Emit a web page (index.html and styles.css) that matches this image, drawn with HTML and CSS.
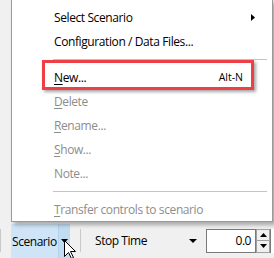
FILE: index.html
```html
<!DOCTYPE html>
<html>
<head>
<meta charset="utf-8">
<link rel="stylesheet" href="styles.css">
</head>
<body>
<div class="screen">
  <div class="workspace"></div>
  <div class="toolbar">
    <span class="tsep first"></span>
    <div class="split-btn">
      <span class="split-label">Scenario</span>
      <span class="split-drop"><svg width="7" height="4" viewBox="0 0 7 4"><path d="M0 0H7L3.5 4Z" fill="#000"/></svg></span>
    </div>
    <span class="tsep"></span>
    <div class="combo">
      <span class="combo-text">Stop Time</span>
      <svg class="combo-arrow" width="8" height="4" viewBox="0 0 8 4"><path d="M0 0H8L4 4Z" fill="#000"/></svg>
    </div>
    <div class="numbox">0.0</div>
    <div class="spin">
      <span class="spin-half"><svg width="7" height="4" viewBox="0 0 7 4"><path d="M0 4H7L3.5 0Z" fill="#000"/></svg></span>
      <span class="spin-half"><svg width="7" height="4" viewBox="0 0 7 4"><path d="M0 0H7L3.5 4Z" fill="#000"/></svg></span>
    </div>
    <div class="edge"></div>
  </div>

  <div class="menu">
    <div class="item"><span class="label">Select Scenario</span><svg class="sub" width="4" height="7" viewBox="0 0 4 7"><path d="M0 0L4 3.5L0 7Z" fill="#000"/></svg></div>
    <div class="item"><span class="label">Configuration / Data Files...</span></div>
    <div class="msep"></div>
    <div class="item"><span class="label"><u>N</u>ew...</span><span class="accel">Alt-N</span></div>
    <div class="item disabled"><span class="label"><u>D</u>elete</span></div>
    <div class="item disabled"><span class="label"><u>R</u>ename...</span></div>
    <div class="item disabled"><span class="label"><u>S</u>how...</span></div>
    <div class="item disabled"><span class="label">Note...</span></div>
    <div class="msep"></div>
    <div class="item disabled"><span class="label"><u>T</u>ransfer controls to scenario</span></div>
  </div>

  <div class="callout"></div>

  <svg class="cursor" width="13" height="20" viewBox="0 0 13 20"><path d="M0.5 0.5V16.5L4.5 12.5L7.5 18.5L9.5 17.5L6.5 11.5H11.5Z" fill="#fff" stroke="#000" stroke-width="1" stroke-linejoin="miter"/></svg>
</div>
</body>
</html>
```

FILE: styles.css
```css
html, body {
  margin: 0;
  padding: 0;
}
body {
  background: #f0f0f0;
  font-family: "Open Sans", "Noto Sans", sans-serif;
  color: #000;
}
.screen {
  position: relative;
  width: 274px;
  height: 258px;
  overflow: hidden;
  display: flex;
  flex-direction: column;
}
.workspace {
  flex: 1;
}
.toolbar {
  height: 35px;
  display: flex;
  align-items: center;
  font-size: 12px;
  letter-spacing: -0.45px;
}
.tsep {
  width: 1px;
  height: 23px;
  background: #c9c9c9;
  margin-left: 10px;
  flex: none;
}
.tsep.first {
  margin-left: 0;
}
.split-btn {
  margin-left: 10px;
  align-self: stretch;
  margin-top: 1px;
  width: 59px;
  display: flex;
  background: #cfe4f6;
  flex: none;
}
.split-label {
  width: 46px;
  padding-left: 1px;
  display: flex;
  align-items: center;
  white-space: nowrap;
}
.split-drop {
  width: 11px;
  border-left: 1px solid #b3d1ec;
  background: #c2dcf2;
  display: flex;
  align-items: center;
  justify-content: center;
}
.combo {
  width: 120px;
  padding-left: 14px;
  box-sizing: border-box;
  display: flex;
  align-items: center;
  flex: none;
}
.combo-text {
  flex: 1;
}
.combo-arrow {
  margin-right: 4px;
}
.numbox {
  margin-left: 5px;
  width: 50px;
  height: 24px;
  box-sizing: border-box;
  border: 1px solid #7a7a7a;
  background: #fff;
  text-align: right;
  font-size: 12px;
  line-height: 22px;
  padding-right: 4px;
  flex: none;
}
.spin {
  width: 14px;
  height: 24px;
  display: flex;
  flex-direction: column;
  flex: none;
}
.spin-half {
  flex: 1;
  border: 1px solid #a0a0a0;
  background: #f0f0f0;
  display: flex;
  align-items: center;
  justify-content: center;
}
.spin-half + .spin-half {
  border-top: none;
}
.edge {
  width: 4px;
  height: 24px;
  border-left: 1px solid #7a7a7a;
  background: #fff;
  flex: none;
}

.menu {
  position: absolute;
  left: 11px;
  top: 0;
  width: 262px;
  box-sizing: border-box;
  padding-top: 5px;
  padding-bottom: 0;
  background: #fff;
  border: 1px solid #9a9a9a;
  border-top: none;
  box-shadow: 3px 3px 4px rgba(0, 0, 0, 0.3);
  font-size: 12px;
  letter-spacing: -0.4px;
}
.item {
  height: 24px;
  display: flex;
  align-items: center;
  padding-left: 42px;
  padding-right: 17px;
}
.item .label {
  flex: 1;
  white-space: nowrap;
}
.item.disabled {
  color: #8d8d8d;
}
.item u {
  text-decoration-thickness: 1px;
  text-underline-offset: 2px;
}
.accel {
  font-size: 10.5px;
  letter-spacing: 0;
  margin-right: 12px;
}
.msep {
  height: 12px;
  display: flex;
  align-items: center;
  padding-left: 41px;
  padding-right: 5px;
}
.msep::before {
  content: "";
  flex: 1;
  height: 1px;
  background: #c4c4c4;
}

.callout {
  position: absolute;
  left: 42px;
  top: 60px;
  width: 212px;
  height: 30px;
  box-sizing: border-box;
  border: 3px solid #ee3f46;
  box-shadow: 2px 2px 3px rgba(0, 0, 0, 0.35);
}
.cursor {
  position: absolute;
  left: 64px;
  top: 240px;
}
```
